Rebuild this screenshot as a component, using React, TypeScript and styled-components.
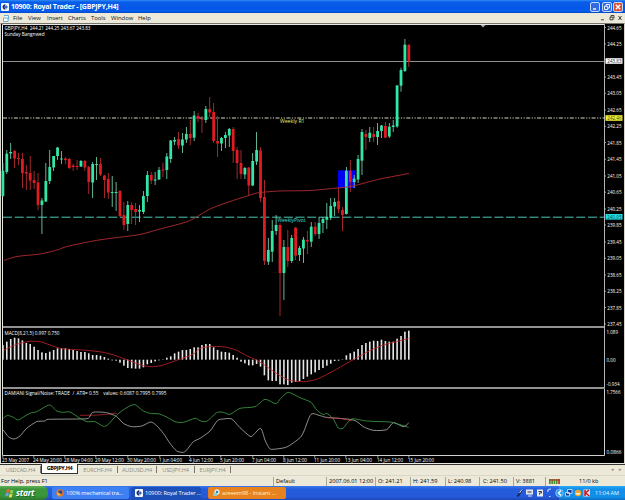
import React from "react";
import styled, { createGlobalStyle } from "styled-components";

const Global = createGlobalStyle`
  * { box-sizing: border-box; }
  html, body { margin: 0; padding: 0; background: #000; overflow: hidden; }
  svg { display: block; flex: none; overflow: visible; }
`;

const Desktop = styled.div`
  width: 625px; height: 500px; display: flex; flex-direction: column;
  font-family: "Open Sans", "Liberation Sans", sans-serif;
  font-size: 6px; line-height: 8px; color: #111; white-space: nowrap; overflow: hidden;
  background: #ece9d8;
`;
const TitleBar = styled.header`
  height: 13px; flex: none; display: flex; align-items: center; padding: 0 2px 0 1px;
  background: linear-gradient(#2e8cf5 0, #0a5cea 2px, #0456e6 9px, #0560f0 11px, #0344c4 13px);
`;
const Title = styled.h1`
  margin: 0 auto 0 2px; color: #fff; font-size: 7px; font-weight: 700; letter-spacing: -0.24px;
`;
const Buttons = styled.div`display: flex; gap: 1.5px;`;
const CaptionButton = styled.span<{ $close?: boolean }>`
  width: 10px; height: 10px; border: 1px solid #c5d8f8; border-radius: 2px;
  background: ${p => (p.$close ? "#d9502f" : "#356be0")};
`;
const MenuBar = styled.nav`
  height: 10px; flex: none; display: flex; align-items: center; padding-left: 3px; background: #ece9d8;
`;
const MenuItem = styled.span<{ $w: number }>`width: ${p => p.$w}px; font-size: 5.9px; color: #111;`;
const WindowControls = styled.div`margin-left: auto; padding-right: 2px;`;

const ChartWindow = styled.main`
  height: 441px; flex: none; display: flex; flex-direction: column; background: #000;
  border-left: 1px solid #d8d6ca; border-right: 1px solid #d8d6ca;
  border-top: 1px solid #77756c; border-bottom: 1px solid #e8e6de;
`;
const Pane = styled.section<{ $h: number }>`
  height: ${p => p.$h}px; flex: none; display: flex; margin-left: 1px;
`;
const Divider = styled.div`height: 2px; flex: none; margin-left: 2px; width: 602px; background: #929292;`;

const TabBar = styled.div`
  height: 11px; flex: none; display: flex; padding-left: 1px; background: #ece9d8; border-top: 1px solid #333;
`;
const Tab = styled.span<{ $w: number; $active?: boolean }>`
  width: ${p => p.$w}px; height: ${p => (p.$active ? 10 : 7)}px; line-height: 8px; text-align: center;
  margin-top: ${p => (p.$active ? -1 : 1)}px;
  font-size: 5.5px; font-weight: ${p => (p.$active ? 700 : 400)}; color: ${p => (p.$active ? "#000" : "#8b897e")};
  letter-spacing: ${p => (p.$active ? -0.35 : -0.12)}px;
  background: ${p => (p.$active ? "#fff" : "transparent")};
  border: solid #333; border-width: ${p => (p.$active ? "0 1px 1px" : "0 1px 0 0")};
  border-color: ${p => (p.$active ? "#333" : "#77756c")};
`;
const TabArrows = styled.span`
  margin-left: auto; display: flex; gap: 5px; padding-right: 3px; color: #888; font-size: 5px;
`;
const StatusBar = styled.footer`
  height: 11px; flex: none; display: flex; align-items: center; background: #ece9d8; border-top: 1px solid #dad7c8;
`;
const Cell = styled.span<{ $w: number; $line?: boolean; $pad?: number }>`
  width: ${p => p.$w}px; height: 9px; padding-left: ${p => p.$pad ?? 2}px; font-size: 5.6px; line-height: 9px;
  border-left: ${p => (p.$line ? "1px solid #aaa799" : "0")}; color: #000;
`;
const TaskBar = styled.div`
  height: 14px; flex: none; display: flex; background: linear-gradient(#3a79ee 0, #245ddc 3px, #2459da 11px, #1c49b4 14px);
`;
const Start = styled.div`
  width: 48px; display: flex; align-items: center; gap: 1px; padding-left: 5px; border-radius: 0 6px 6px 0;
  background: linear-gradient(#5fb35a 0, #3c963a 3px, #39953a 10px, #2b772c 14px);
  color: #fff; font: italic 700 8.4px/12px "Open Sans", sans-serif; letter-spacing: -0.2px; text-shadow: 1px 1px 0 #24642a;
`;
const Task = styled.div<{ $w: number; $gap: number; $bg: string; $fg?: string }>`
  width: ${p => p.$w}px; margin: 1px 0 1px ${p => p.$gap}px; padding-left: 4px; border-radius: 2px;
  display: flex; align-items: center; gap: 2px; background: ${p => p.$bg}; color: ${p => p.$fg ?? "#fff"};
  font-size: 5.7px; letter-spacing: -0.12px;
`;
const QuickIcons = styled.div`margin-left: auto; display: flex; align-items: center; padding-right: 3px;`;
const Tray = styled.div`
  width: 66px; display: flex; align-items: center; padding-left: 3px; gap: 2px; color: #e9f6ff; font-size: 5.5px;
  background: linear-gradient(#25a9f4 0, #1290e9 3px, #1290e9 11px, #0c6cc0 14px);
`;

const GREEN = "#33e6a6";
const RED = "#e01c22";
const FIRST_X = 2.9;
const STEP = 3.903;
const barX = (i: number) => FIRST_X + STEP * i;

/* direction, high, body top, body bottom, low */
const candles: [0 | 1, number, number, number, number][] = [
  [1,163,170.7,196,197],[1,150,153.7,172,174],[1,143,152,153.5,159],[0,150,151,158.5,168],[0,153,158,159,165],
  [0,153,159,173,188],[0,165,172,173.5,190],[0,156,173,180.5,190],[0,171,180,183,189],[0,173,182.5,205,210],
  [1,198,200.5,205,234],[1,163,181,201.5,202],[1,150,167,181,184],[1,156,156,167.5,171],[1,147,147.5,156,160],
  [1,151,158.5,159.5,164],[0,157,158.5,160,164],[0,158,159,168,169],[0,164,165.5,167,171],[0,160,166,167,170],
  [1,160,161,166.5,167],[0,160,161,167.5,171],[0,166,167,182,194],[1,162,164,182.5,198],[1,157,164,165,180],
  [0,158,164,174.5,176],[0,175,175.5,180,198],[0,173,179,192.5,199],[1,176,192,193,207],[1,182,192,193,211],
  [0,190,191,216,217],[0,202,215,225,230],[1,201,205,224,231],[0,202,205,210,224],[0,203,209,212,225],
  [1,205,210,211.5,222],[1,191,196,212,214],[1,171,175,196,202],[0,172,175,180.5,184],[1,172,179.5,180.5,185],
  [1,167,170,179.5,180],[0,162.5,169.5,170.5,177],[1,153,156.5,170,179],[1,140,140.5,159,163],[1,137,140,141.5,145],
  [0,132,139,145.5,149],[1,133,139.5,145.5,153],[1,127,134,139.5,143],[0,120,134,138,145],[1,111,115.5,137.7,141],
  [0,113,116,118.5,122],[0,116,118.5,119.5,133],[1,106,109,120,123],[0,97,109,112.5,117],[0,103,112,141,143],
  [0,116,141,143.5,157],[1,137,138,143.5,151],[1,132,135,138,148],[1,128,129,135.5,147],[0,127,129,151,163],
  [0,147,150,163,179],[0,150,163,174,179],[1,167,168,174.5,179],[0,167,167.5,185.5,195],[1,153,161,185.5,186],
  [1,132,150,161.5,165],[0,147,150.5,198,202],[0,180,197,261,265],[1,238,250,261.7,265],[1,220,231,251.7,262],
  [1,215,225,231,235],[0,223,225,273,316],[1,240,247,273,300],[0,230,247,261,267],[1,235,238,261,263],
  [0,227,227.7,255.7,260],[1,246,248,255,261],[1,237,239.7,248.5,263],[0,231,240,241.5,254],[1,222,226.7,241.7,247],
  [0,222,226.7,234,236],[1,217,223,234,239],[1,217,219,223,233],[1,203,217,219.7,229],[1,198,206,218,220],
  [1,198,202,206.5,216],[0,188,201,209.5,213],[0,207,210,215,231],[1,167,170.7,214,214.5],[0,160,170.7,182,192],
  [1,175,178.7,182,188],[1,155,159,179.5,183],[1,129,132,160.7,175],[0,130,134,137,150],[1,127,132.7,138,142],
  [0,127,134,137,142],[1,123,131,137,145],[1,125,125.5,131,138],[0,122,126,137.7,138],[1,123,126.7,136.5,138],
  [1,120,125.5,127,132],[1,85,85.5,126.5,127.7],[1,67.7,70,85.7,91.7],[1,39,44.7,71,72],[0,44,45,61.5,67],
];

/* histogram bar ends in thirds of a pixel below y = 325 */
const macd = [
  60,50,42,38,40,46,54,57,65,75,82,84,80,75,70,70,70,72,75,78,81,81,85,90,90,92,96,101,106,107,113,122,129,130,131,
  131,127,118,114,109,106,103,98,94,85,80,75,75,72,67,67,60,57,57,67,75,80,81,83,90,98,110,115,121,121,117,125,151,
  166,168,168,178,178,180,173,171,168,162,155,148,142,135,129,122,116,108,107,103,91,85,80,72,60,54,50,47,48,44,48,
  50,50,41,33,20,17,
];

type Pt = [number, number];
const left = (a: Pt[]): Pt[] => a.map(([x, y]) => [x / 3, 325 + y / 3]);
const right = (a: Pt[]): Pt[] => a.map(([x, y]) => [200 + x / 3, 325 + y / 3]);

const curve = (p: Pt[]) => {
  let d = `M${p[0][0]} ${p[0][1]}`;
  for (let i = 0; i < p.length - 1; i++) {
    const a = p[i - 1] ?? p[i], b = p[i], c = p[i + 1], e = p[i + 2] ?? c;
    const k = 8;
    d += `C${b[0] + (c[0] - a[0]) / k} ${b[1] + (c[1] - a[1]) / k} ${c[0] - (e[0] - b[0]) / k} ${c[1] - (e[1] - b[1]) / k} ${c[0]} ${c[1]}`;
  }
  return d;
};

const average: Pt[] = [
  [4,260.5],[17,256.5],[40,254],[57,250],[67,246.5],[93,241],[113,238],[140,234.5],[160,229],[183,223],[193,219],
  [210,209],[230,201.5],[255,193.5],[262,192.3],[280,191],[310,190.5],[337,188],[353,186],[380,179],[409,173.5],
];
const signal: Pt[] = [
  ...left([[12,75],[40,62],[60,55],[90,49],[120,50],[150,60],[180,70],[210,73],[260,76],[310,82],[350,93],[390,108],[430,122],[460,125],[490,120],[530,106],[580,87]]),
  ...right([[0,70],[40,64],[80,67],[110,76],[140,92],[170,105],[200,125],[240,152],[270,166],[310,170],[350,163],[400,138],[440,115],[480,93],[520,72],[560,57],[590,50],[626,40]]),
];
const noise: Pt[] = [
  ...left([[10,280],[22,271],[40,277],[55,285],[75,273],[92,264],[110,260],[148,240],[170,258],[190,262],[210,261],[240,280],[262,290],[285,290],[310,304],[325,298],[350,270],[380,248],[405,239],[430,258],[455,266],[475,266],[500,276],[525,290],[550,292],[585,280]]),
  ...right([[0,287],[20,289],[50,263],[70,262],[90,268],[120,250],[165,245],[195,223],[228,236],[242,220],[265,202],[300,218],[333,232],[350,255],[370,269],[380,265],[400,282],[415,309],[430,309],[455,282],[500,288],[570,291],[590,296],[626,307]]),
];
const strength: Pt[] = [
  ...left([[10,315],[25,335],[42,342],[60,333],[80,310],[110,290],[135,288],[145,283],[230,282],[265,280],[278,262],[320,263],[350,275],[370,295],[395,305],[425,303],[452,291],[470,302],[490,325],[510,355],[530,378],[550,382],[560,375],[580,350]]),
  ...right([[0,340],[30,318],[52,287],[70,282],[95,282],[120,308],[150,334],[160,330],[182,310],[195,345],[205,365],[215,373],[260,366],[300,338],[312,318],[333,268],[360,272],[380,277],[460,285],[490,305],[520,316],[560,314],[580,293],[610,305],[626,294]]),
];

const Label = styled.text<{ $size: number }>`
  font-family: "Open Sans", "Liberation Sans", sans-serif; font-size: ${p => p.$size}px; white-space: pre;
`;
type TxtProps = { x: number; y: number; w: number; children: string; fill?: string; size?: number };
const Txt = ({ x, y, w, children, fill = "#fff", size = 5.4 }: TxtProps) => (
  <Label x={x} y={y} fill={fill} $size={size} textLength={w} lengthAdjust="spacingAndGlyphs">{children}</Label>
);

const prices: [string, number][] = [
  ["244.65",27.5],["244.25",44],["243.45",77],["243.05",93.3],["242.65",110],["242.25",126.3],["241.85",142.5],
  ["241.45",159.2],["241.05",176],["240.65",192.2],["240.25",209],["239.85",225],["239.45",242],["239.05",258.3],
  ["238.65",275],["238.25",291.3],["237.85",307.5],["237.45",324],
];
const tags: [string, number, string, string][] = [
  ["243.83",61,"#fff","#222"],["242.46",118,"#f1ee32","#3b3b10"],["240.05",216.8,"#20dfe4","#064846"],
];
const dates: [string, number, number][] = [
  ["23 May 2007",2,27],["24 May 20:00",33,29],["28 May 04:00",64,29],["29 May 12:00",95,29],["30 May 20:00",127,29],
  ["1 Jun 04:00",159,23],["4 Jun 12:00",189,24],["5 Jun 20:00",220,24],["7 Jun 04:00",252,24],["8 Jun 12:00",283,24],
  ["11 Jun 20:00",314,26],["13 Jun 04:00",345,27],["14 Jun 12:00",377,26],["15 Jun 20:00",408,26],
];

const PricePane = () => (
  <Pane $h={302}>
    <svg width="621" height="302" viewBox="2 24 621 302">
      <path d="M2.500 326V24.500H604" fill="none" stroke="#e8e8e8" />
      <path d="M604.500 24V326" stroke="#b4b4b4" />
      <path d="M480.500 25h5l-2.500 2.500z" fill="#aaa" />
      <path d="M3 61.500H604" stroke="#8f8f8f" />
      <path d="M3 118H604" stroke="#d6d6c4" strokeDasharray="4 1.500 1.200 1.500 1.200 1.500" />
      <path d="M3 217.200H604" stroke="#4cc9b8" strokeDasharray="9 2.700" />
      <rect x="338" y="170.300" width="17.500" height="17.800" fill="#0000f4" />
      {candles.map(([up, hi, top, bottom, lo], i) => (
        <g key={i} fill={up ? GREEN : RED}>
          <rect x={barX(i) - 0.4} y={hi} width="0.8" height={lo - hi} fill={up ? "#7ce0b8" : "#c83236"} />
          <rect x={barX(i) - 1.4} y={top} width="2.8" height={bottom - top} />
        </g>
      ))}
      <path d={curve(average)} fill="none" stroke="#b12b31" strokeWidth="0.9" />
      <Txt x={4.5} y={30} w={86} size={4.7}>GBPJPY,H4  244.21 244.25 243.67 243.83</Txt>
      <Txt x={4.5} y={35.6} w={40} size={4.9}>Sunday Bangnwed</Txt>
      <Txt x={280} y={123} w={24.5} fill="#f0ee70">Weekly R1</Txt>
      <Txt x={277.5} y={222} w={28} fill="#43e0d6">WeeklyPivot</Txt>
      {prices.map(([t, y]) => (
        <g key={t}>
          <path d={`M604 ${y}h2`} stroke="#bbb" strokeWidth="0.8" />
          <Txt x={607.3} y={y + 2} w={14.2}>{t}</Txt>
        </g>
      ))}
      {tags.map(([t, y, bg, fg]) => (
        <g key={t}>
          <rect x="605.500" y={y - 2.8} width="17" height="5.600" fill={bg} />
          <Txt x={607.3} y={y + 2} w={14.2} fill={fg}>{t}</Txt>
        </g>
      ))}
    </svg>
  </Pane>
);

const MacdPane = () => (
  <Pane $h={59}>
    <svg width="621" height="59" viewBox="2 328 621 59">
      <path d="M2.500 326V389" stroke="#e8e8e8" />
      <path d="M604.500 326V389" stroke="#b4b4b4" />
      {macd.map((v, i) => {
        const y = 325 + v / 3;
        return <rect key={i} x={barX(i) - 0.8} y={Math.min(y, 359.7)} width="1.6" height={Math.abs(y - 359.7)} fill="#e6e6e6" />;
      })}
      <path d={curve(signal)} fill="none" stroke="#c9252b" strokeWidth="0.8" />
      <Txt x={4.5} y={334.7} w={55}>MACD(8,21,5) 0.997 0.750</Txt>
      <Txt x={606.5} y={334} w={11.5} size={4.8}>1.089</Txt>
      <Txt x={606.5} y={361.7} w={9}>0.00</Txt>
      <Txt x={606.5} y={385.8} w={13} size={4.8}>-0.934</Txt>
    </svg>
  </Pane>
);

const DamianiPane = () => (
  <Pane $h={74}>
    <svg width="621" height="74" viewBox="2 389 621 74">
      <path d="M2.500 389V455.500H604.500V389" fill="none" stroke="#cfcfcf" />
      <path d={curve(left([[240, 271], [295, 270], [350, 265]]))} fill="none" stroke="#b92a30" strokeWidth="0.8" />
      <path d={curve(strength)} fill="none" stroke="#a9a9a9" strokeWidth="0.85" />
      <path d={curve(noise)} fill="none" stroke="#3c9a44" strokeWidth="0.85" />
      <path d={curve(right([[380, 278], [425, 281], [455, 287]]))} fill="none" stroke="#c23a42" strokeWidth="0.8" />
      <Txt x={4.5} y={395.3} w={162}>DAMIANI Signal/Noise: TRADE  /  ATR= 0.55    values: 0.6087 0.7995 0.7995</Txt>
      <Txt x={606.5} y={394.3} w={14} size={4.8}>1.7566</Txt>
      <Txt x={606.5} y={454.3} w={15}>0.0866</Txt>
      {dates.map(([t, x, w]) => (
        <g key={t}>
          <path d={`M${x + 0.8} 455.700v2`} stroke="#ccc" strokeWidth="0.8" />
          <Txt x={x} y={462.2} w={w}>{t}</Txt>
        </g>
      ))}
    </svg>
  </Pane>
);

const AppIcon = () => (
  <svg width="8" height="8" viewBox="0 0 8 8">
    <rect width="8" height="8" rx="1" fill="#f4f7fd" />
    <path d="M4.5 1.4A2.6 2.6 0 1 0 4.7 6.5L3.5 4z" fill="#162b73" />
    <path d="M5 2l2 2-2 2-1.4-2z" fill="#3869c8" />
  </svg>
);

export default function App() {
  return (
    <>
      <Global />
      <Desktop>
        <TitleBar>
          <AppIcon />
          <Title>10900: Royal Trader - [GBPJPY,H4]</Title>
          <Buttons>
            <CaptionButton><svg width="8" height="8" viewBox="0 0 8 8"><path d="M2 6h3" stroke="#fff" strokeWidth="1.4" /></svg></CaptionButton>
            <CaptionButton><svg width="8" height="8" viewBox="0 0 8 8"><path d="M3 3V1.5h3.5V5H5M1.5 3.3h3.2v3.2H1.5z" fill="none" stroke="#fff" strokeWidth=".9" /></svg></CaptionButton>
            <CaptionButton $close><svg width="8" height="8" viewBox="0 0 8 8"><path d="M1.8 1.8l4.4 4.4M6.2 1.8L1.8 6.2" stroke="#fff" strokeWidth="1.4" /></svg></CaptionButton>
          </Buttons>
        </TitleBar>
        <MenuBar>
          <MenuItem $w={10}>
            <svg width="7" height="7" viewBox="0 0 7 7"><path d="M1 .5h4.5v4M.5 3h4.500v3.500H.5z" fill="#fff" stroke="#58a7d8" strokeWidth=".9" /></svg>
          </MenuItem>
          <MenuItem $w={15}>File</MenuItem><MenuItem $w={19}>View</MenuItem><MenuItem $w={21}>Insert</MenuItem>
          <MenuItem $w={23}>Charts</MenuItem><MenuItem $w={20}>Tools</MenuItem><MenuItem $w={27}>Window</MenuItem>
          <MenuItem $w={20}>Help</MenuItem>
          <WindowControls>
            <svg width="24" height="8" viewBox="0 0 24 8">
              <path d="M2 5.800h3M11 3.200h3v2.600h-3zM12 3V1.500h3v3M19.500 2l3 4M22.500 2l-3 4" fill="none" stroke="#333" strokeWidth=".9" />
            </svg>
          </WindowControls>
        </MenuBar>
        <ChartWindow>
          <PricePane />
          <Divider />
          <MacdPane />
          <Divider />
          <DamianiPane />
        </ChartWindow>
        <TabBar>
          <Tab $w={40}>USDCAD,H4</Tab>
          <Tab $w={37} $active>GBPJPY,H4</Tab>
          <Tab $w={40}>EURCHF,H4</Tab>
          <Tab $w={39}>AUDUSD,H4</Tab>
          <Tab $w={38}>USDJPY,H4</Tab>
          <Tab $w={36}>EURJPY,H4</Tab>
          <TabArrows><span>◂</span><span>▸</span></TabArrows>
        </TabBar>
        <StatusBar>
          <Cell $w={273} $pad={1}>For Help, press F1</Cell>
          <Cell $w={53} $line>Default</Cell>
          <Cell $w={49} $line>2007.06.01 12:00</Cell>
          <Cell $w={35} $line>O: 241.21</Cell>
          <Cell $w={35} $line>H: 241.59</Cell>
          <Cell $w={34} $line>L: 240.98</Cell>
          <Cell $w={34} $line $pad={3}>C: 241.50</Cell>
          <Cell $w={32} $line>V: 3881</Cell>
          <Cell $w={34} $line $pad={2}>
            <svg width="13" height="9" viewBox="0 0 13 9">
              {[0, 1, 2, 3, 4].map(i => <rect key={i} x={1 + i * 2.3} y="2" width="1.7" height="5" fill={i < 4 ? "#4b8d32" : "#b23a22"} />)}
              <path d="M1 3h11" stroke="#b23a22" strokeWidth="1.200" />
            </svg>
          </Cell>
          <Cell $w={40} $pad={0}>11/0 kb</Cell>
        </StatusBar>
        <TaskBar>
          <Start>
            <svg width="10" height="10" viewBox="0 0 10 10">
              <path d="M1.800 1.500q1.500-1 3 0L4 4.500q-1.500-1-3 0z" fill="#ef6336" /><path d="M5.500 1.800q1.500 1 3 0L7.800 5q-1.500 1-3 0z" fill="#8fd04b" />
              <path d="M.9 5.200q1.500-1 3 0L3 8.500q-1.500-1-3 0z" fill="#64a2f2" /><path d="M4.600 5.700q1.500 1 3 0L6.800 9q-1.500 1-3 0z" fill="#f9d545" />
            </svg>
            start
          </Start>
          <Task $w={77} $gap={4} $bg="#3d80f3">
            <svg width="8" height="8" viewBox="0 0 8 8"><circle cx="4" cy="4" r="3.700" fill="#e4772a" /><circle cx="4.300" cy="3.300" r="2" fill="#25489b" /><path d="M1 3q2 1 4 2L3 7Q1 6 1 3z" fill="#f4b045" /></svg>
            100% mechanical tra...
          </Task>
          <Task $w={70} $gap={2} $bg="#1c4fb8"><AppIcon />10900: Royal Trader ...</Task>
          <Task $w={78} $gap={7} $bg="#e8821e" $fg="#fff0c8">
            <svg width="8" height="8" viewBox="0 0 8 8"><circle cx="5" cy="3" r="2.700" fill="#d9ebf5" /><circle cx="5" cy="3" r="1.200" fill="#3a7f89" /><path d="M1 4h4v3H1z" fill="#95c9c6" /></svg>
            azeeem98 - Instant ...
          </Task>
          <QuickIcons>
            <svg width="40" height="12" viewBox="0 0 40 12">
              <path d="M1.500 9.500L6 3" stroke="#17255c" strokeWidth="2" /><path d="M3.500 6L6 2.500" stroke="#d3dcf0" />
              <path d="M10 2.500h7v5h-7z" fill="#e9ecf2" /><path d="M11 4h5v2h-5zM12 9h4" fill="#334" stroke="#dde" />
              <rect x="21" y="2.500" width="6" height="7" fill="#e9ecf2" /><path d="M22.500 4.500h3v1.500h-2v1.500" stroke="#333" fill="none" />
              <path d="M32 5q-1-3 3-3M33 9.500h1.500" stroke="#b9d8ff" strokeWidth="1.200" fill="none" />
            </svg>
          </QuickIcons>
          <Tray>
            <svg width="31" height="12" viewBox="1 0 31 12">
              <circle cx="-1.500" cy="6" r="3.800" fill="#2d9df1" stroke="#8fd0fb" strokeWidth=".8" /><path d="M0 3.500L-2.500 6 0 8.500" fill="none" stroke="#fff" strokeWidth="1.400" />
              <path d="M6.500 2.500h4.500v4h-4.500zM4.500 5.500h4v3.500h-4z" fill="#183c91" stroke="#d9e8ff" strokeWidth=".8" />
              <circle cx="17" cy="6" r="3.200" fill="#f1a32c" /><path d="M14.500 6h5q-.5 2-2.500 2t-2.500-2z" fill="#fbead2" />
              <rect x="22.500" y="2.500" width="6.500" height="7" fill="#efd9dc" /><path d="M24 3v6M28 3l-3.500 3L28.500 9" fill="none" stroke="#c0192b" strokeWidth="1.500" />
            </svg>
            <span>11:04 AM</span>
          </Tray>
        </TaskBar>
      </Desktop>
    </>
  );
}
